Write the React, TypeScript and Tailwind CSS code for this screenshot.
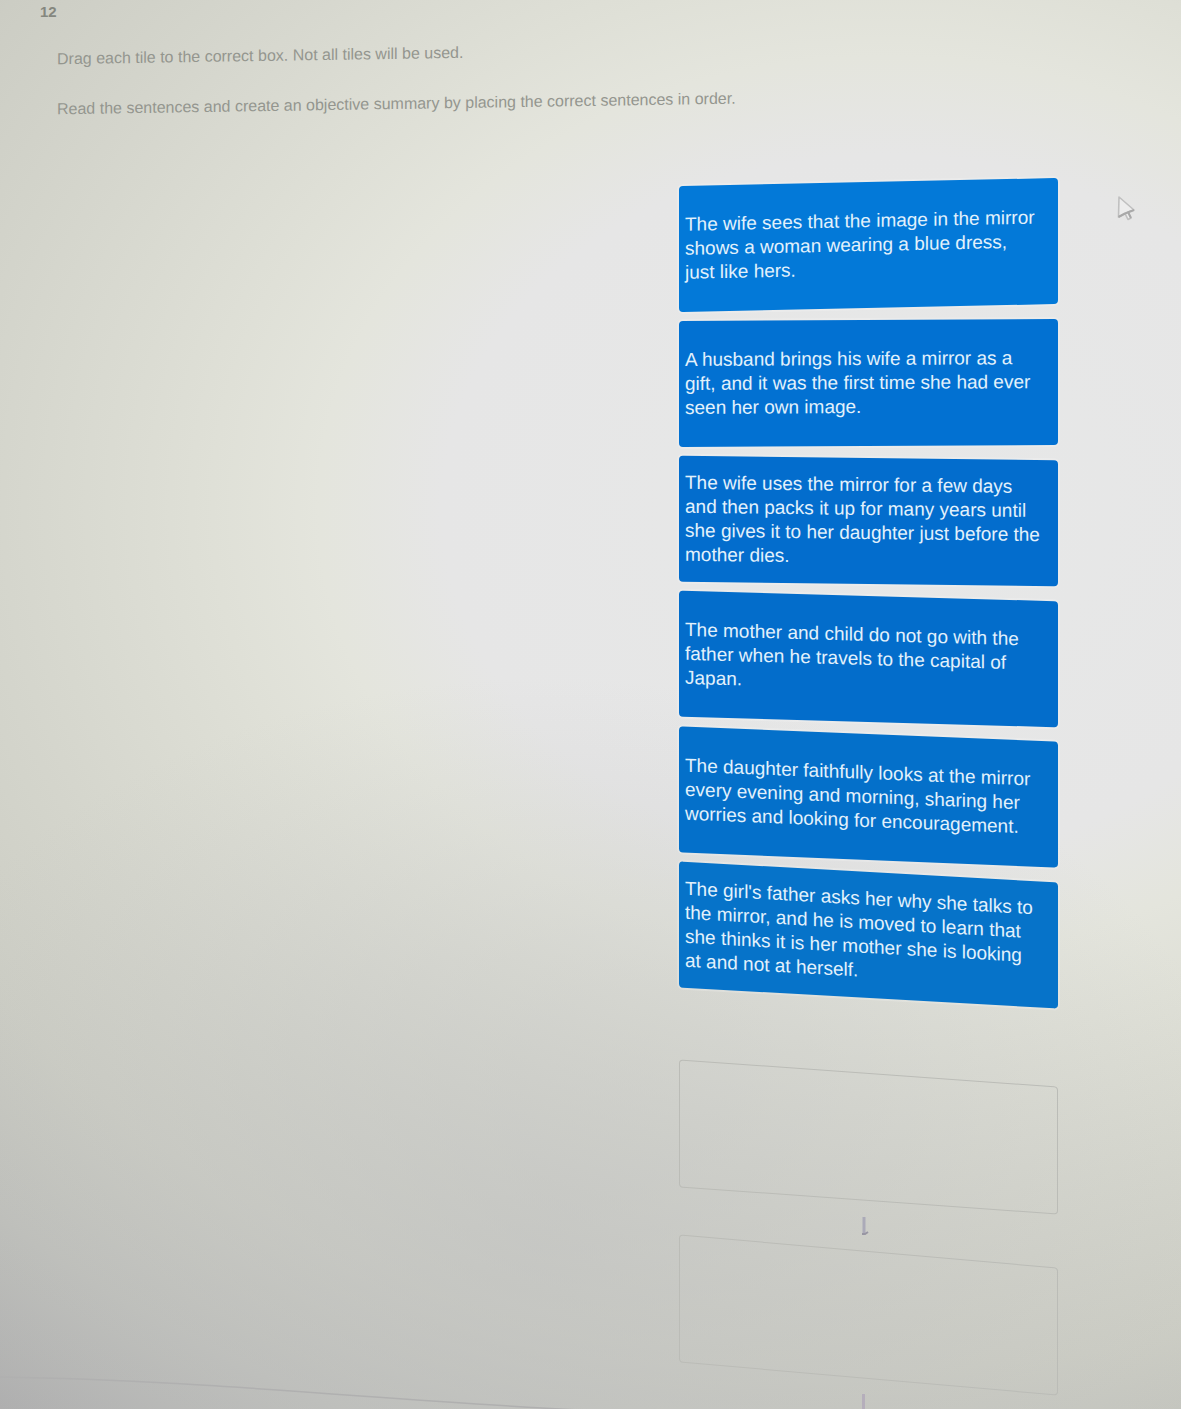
// App.tsx
const TILES = [
  {
    lines: ['The wife sees that the image in the mirror', 'shows a woman wearing a blue dress,', 'just like hers.'],
    tilt: 'skew-y-[-1.2deg]',
    color: 'bg-[#0379d8]',
  },
  {
    lines: ['A husband brings his wife a mirror as a', 'gift, and it was the first time she had ever', 'seen her own image.'],
    tilt: 'skew-y-[-0.3deg]',
    color: 'bg-[#0271d2]',
  },
  {
    lines: ['The wife uses the mirror for a few days', 'and then packs it up for many years until', 'she gives it to her daughter just before the', 'mother dies.'],
    tilt: 'skew-y-[0.7deg]',
    color: 'bg-[#036dcd]',
  },
  {
    lines: ['The mother and child do not go with the', 'father when he travels to the capital of', 'Japan.'],
    tilt: 'skew-y-[1.6deg]',
    color: 'bg-[#036dcb]',
  },
  {
    lines: ['The daughter faithfully looks at the mirror', 'every evening and morning, sharing her', 'worries and looking for encouragement.'],
    tilt: 'skew-y-[2.3deg]',
    color: 'bg-[#0470ca]',
  },
  {
    lines: ["The girl's father asks her why she talks to", 'the mirror, and he is moved to learn that', 'she thinks it is her mother she is looking', 'at and not at herself.'],
    tilt: 'skew-y-[3.2deg]',
    color: 'bg-[#0673c9]',
  },
];

const SLOTS = [
  { id: 1, tilt: 'skew-y-[4.1deg]' },
  { id: 2, tilt: 'skew-y-[5deg]' },
];

function Arrow({ className }: { className: string }) {
  return (
    <svg viewBox="0 0 10 20" className={className} fill="none" aria-hidden="true">
      <path d="M5 1V18" stroke="#abaab8" strokeWidth="3" />
      <path d="M3 18H6L9 16" stroke="#9896a3" strokeWidth="2" />
    </svg>
  );
}

export default function App() {
  return (
    <main
      className="relative min-h-screen overflow-hidden font-['Liberation_Sans',sans-serif] bg-[radial-gradient(ellipse_62%_40%_at_46%_88%,rgba(190,191,192,0.55)_0%,rgba(190,191,192,0.3)_50%,rgba(190,191,192,0)_100%),radial-gradient(ellipse_75%_50%_at_75%_36%,#e7e8e8_0%,#e6e6e6_50%,#e4e5dd_64%,#dfe0d7_76%,#d4d5cc_102%,#cccdc4_122%,#bebfba_142%,#adadad_162%)]"
    >
      <header className="flex flex-col">
        <span className="pl-10 pt-1 text-[15px] leading-4 font-bold text-[#85877f]">12</span>
        <h1 className="self-start ml-[57px] mt-6 text-base leading-6 text-[#94968f] skew-y-[-0.9deg]">
          Drag each tile to the correct box. Not all tiles will be used.
        </h1>
        <p className="self-start ml-[57px] mt-6 text-base leading-6 text-[#94968f] skew-y-[-0.9deg]">
          Read the sentences and create an objective summary by placing the correct sentences in order.
        </p>
      </header>

      <div className="mt-[66px] flex justify-end pr-[123px]">
        <div className="w-full max-w-[379px]">
          {/* Tiles */}
          <div className="flex flex-col gap-3">
            {TILES.map((tile) => (
              <button
                key={tile.lines[0]}
                type="button"
                draggable
                className={`flex min-h-[126px] w-full items-center rounded-sm px-1.5 text-left text-[19px] leading-6 text-[#e2f1fc] ring-2 ring-white/20 ${tile.color} ${tile.tilt}`}
              >
                <span className="whitespace-pre-line">{tile.lines.join('\n')}</span>
              </button>
            ))}
          </div>

          {/* Drop boxes */}
          <div className="mt-[75px] flex flex-col items-center">
            {SLOTS.map((slot) => (
              <div key={slot.id} className="flex w-full flex-col items-center">
                <div className={`h-32 w-full rounded-sm border border-[#bbbcb7] ${slot.tilt}`} />
                {slot.id < SLOTS.length && <Arrow className="my-[15px] ml-[-10px] h-5 w-2.5" />}
              </div>
            ))}
            <div className="mt-[15px] ml-[-10px] h-4 w-[3px] bg-[#b5aebb]" />
          </div>
        </div>
      </div>

      {/* Mouse pointer */}
      <svg viewBox="0 0 20 28" className="absolute left-[1116px] top-[195px] h-7 w-5" aria-hidden="true">
        <path d="M3 2L18 15L12 17L15 23L12 24.5L9 18.5L2.5 22Z" fill="#ededed" stroke="#c0c0c0" strokeWidth="1.6" strokeLinejoin="round" />
        <path d="M2.5 22L9 18.5L18 15M12 17L15 23" fill="none" stroke="#a9a9a9" strokeWidth="2" />
      </svg>

      {/* Page bottom edge */}
      <svg viewBox="0 0 600 34" className="absolute bottom-0 left-0 h-[34px] w-[600px]" fill="none" aria-hidden="true">
        <path d="M0 1C200 4 380 24 580 34" stroke="#b0b0b0" strokeWidth="1.5" />
      </svg>
    </main>
  );
}
